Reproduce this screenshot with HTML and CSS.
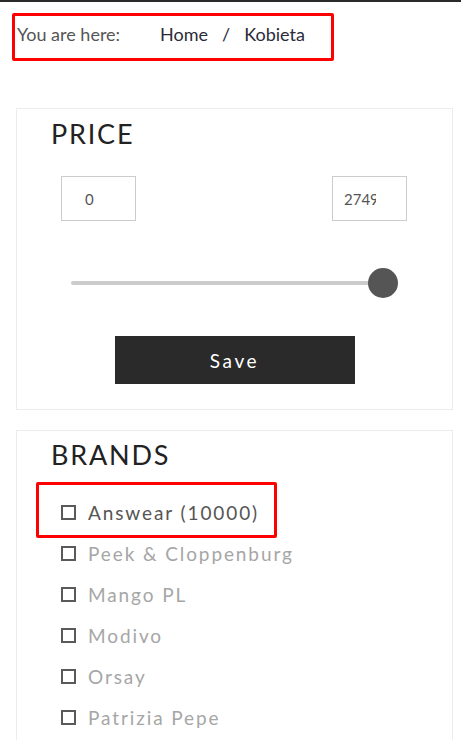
FILE: index.html
```html
<!DOCTYPE html>
<html lang="pl">
<head>
	<meta charset="UTF-8">
	<meta name="viewport" content="width=device-width, initial-scale=1.0">
	<title>Kobieta</title>
	<link rel="stylesheet" href="styles.css">
</head>
<body>
	<div class="topbar"></div>

	<nav class="crumbs">
		<span class="crumbs-label">You are here:</span>
		<a href="#" class="crumb">Home</a>
		<span class="crumb-sep">/</span>
		<a href="#" class="crumb">Kobieta</a>
	</nav>

	<section class="card price">
		<h2 class="card-title">PRICE</h2>
		<div class="price-inputs">
			<input type="text" class="price-box price-min" value="0" title="Min">
			<input type="text" class="price-box price-max" value="2749" title="Max">
		</div>
		<div class="slider">
			<div class="slider-track"></div>
			<div class="slider-thumb"></div>
		</div>
		<button type="button" class="save">Save</button>
	</section>

	<section class="card brands">
		<h2 class="card-title">BRANDS</h2>
		<ul class="brand-list">
			<li class="brand brand-hit"><span class="box"></span><span class="brand-name">Answear (10000)</span></li>
			<li class="brand brand-off"><span class="box"></span><span class="brand-name">Peek &amp; Cloppenburg</span></li>
			<li class="brand brand-off"><span class="box"></span><span class="brand-name">Mango PL</span></li>
			<li class="brand brand-off"><span class="box"></span><span class="brand-name">Modivo</span></li>
			<li class="brand brand-off"><span class="box"></span><span class="brand-name">Orsay</span></li>
			<li class="brand brand-off"><span class="box"></span><span class="brand-name">Patrizia Pepe</span></li>
		</ul>
	</section>
</body>
</html>
```

FILE: styles.css
```css
body {
	margin: 0;
	font-family: "Lato", "Open Sans", sans-serif;
	color: #222;
	background: #fff;
}

.topbar {
	height: 2px;
	background: #2a2a2a;
}

.crumbs {
	display: flex;
	align-items: center;
	width: fit-content;
	margin: 11px 0 0 12px;
	padding: 0 26px 6px 2px;
	height: 36px;
	line-height: 36px;
	border: 3px solid #f00;
	border-radius: 2px;
	font-size: 18px;
}

.crumbs-label {
	color: #555;
	margin-right: 40px;
}

.crumb {
	color: #2b2b38;
	text-decoration: none;
}

.crumb-sep {
	color: #2b2b38;
	margin: 0 14px;
}

.card {
	margin: 47px 8px 0 16px;
	border: 1px solid #ececec;
	padding-top: 11px;
}

.brands {
	margin-top: 20px;
	padding-top: 10px;
	padding-bottom: 40px;
}

.card-title {
	margin: 0 0 29px 34px;
	font-size: 27px;
	line-height: 27px;
	font-weight: 400;
	letter-spacing: 1.8px;
	color: #222;
}

.price-inputs {
	display: flex;
	justify-content: space-between;
	padding: 0 45px 0 44px;
}

.price-box {
	box-sizing: border-box;
	width: 75px;
	height: 45px;
	border: 1px solid #ccc;
	border-radius: 0;
	font-family: inherit;
	font-size: 15px;
	color: #555;
	outline: none;
}

.price-min {
	padding: 0 10px 0 23px;
}

.price-max {
	padding: 0 30px 0 11px;
}

.slider {
	display: flex;
	align-items: center;
	margin: 47px 54px 0;
	height: 30px;
}

.slider-track {
	flex: 1;
	height: 4px;
	margin-right: -15px;
	border-radius: 2px;
	background: #ccc;
}

.slider-thumb {
	width: 30px;
	height: 30px;
	border-radius: 50%;
	background: #555;
}

.save {
	display: block;
	width: 240px;
	height: 48px;
	margin: 38px auto 25px;
	border: 0;
	background: #2a2a2a;
	color: #fff;
	font-family: inherit;
	font-size: 19px;
	letter-spacing: 2.6px;
}

.brands .card-title {
	margin-bottom: 0;
}

.brand-list {
	list-style: none;
	margin: 24px 0 0;
	padding: 0 0 0 44px;
}

.brand {
	display: flex;
	align-items: center;
	height: 41px;
}

.brand-hit {
	width: fit-content;
	margin: -10px 0 -5px -25px;
	padding: 7px 15px 2px 22px;
	border: 3px solid #f00;
	border-radius: 2px;
}

.box {
	box-sizing: border-box;
	width: 15px;
	height: 15px;
	border: 2px solid #5a5a5a;
	margin-right: 12px;
}

.brand-name {
	font-size: 19px;
	letter-spacing: 1.9px;
	color: #555;
}

.brand-off .brand-name {
	color: #a6a6a6;
}
```
